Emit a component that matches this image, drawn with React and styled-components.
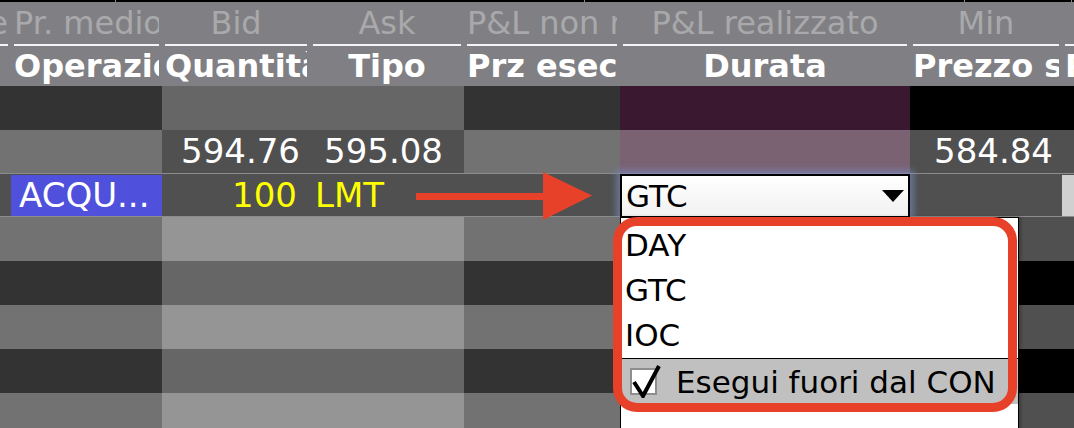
import React from 'react'
import styled, { createGlobalStyle, css } from 'styled-components'

// column widths shared by header and body rows (the last one runs off screen)
const COLS = '11px 151px 148px 154px 156px 290px 152px 160px'

const GlobalStyle = createGlobalStyle`
  html, body {
    margin: 0;
    padding: 0;
    background: #808084;
  }
  body {
    overflow: hidden;
  }
`

const Screen = styled.div`
  position: relative;
  width: 1074px;
  height: 428px;
  overflow: hidden;
  background: #808084;
  font-family: 'DejaVu Sans', Verdana, sans-serif;
`

// header

const TopStrip = styled.div`
  display: grid;
  grid-template-columns: 116px 469px 380px 107px 1fr;
  height: 2px;
  background: #000;
`

const Tick = styled.div`
  border-right: 1px solid #8a8a8a;
`

const HeaderRow = styled.div`
  display: grid;
  grid-template-columns: ${COLS};
  height: ${(p) => p.$h}px;
  background: #808084;
`

const HeadCell = styled.div`
  min-width: 0;
  padding: ${(p) => p.$pad || '0 3px'};
`

const HeadLabel = styled.div`
  height: 100%;
  box-sizing: border-box;
  overflow: hidden;
  white-space: nowrap;
  text-align: center;
  direction: ${(p) => (p.$rtl ? 'rtl' : 'ltr')};
  font-size: 32px;
  ${(p) =>
    p.$top
      ? css`
          color: #a9a9ab;
          line-height: 42px;
          border-bottom: 2px solid #f4f4f4;
        `
      : css`
          color: #fff;
          font-weight: bold;
          line-height: 40px;
        `}
`

// body

const Row = styled.div`
  display: grid;
  grid-template-columns: ${COLS};
  height: ${(p) => p.$h || 44}px;
  box-sizing: border-box;
  ${(p) =>
    p.$selected &&
    css`
      background: #505050;
      border-top: 1px solid #8c8c8c;
      border-bottom: 1px solid #8c8c8c;
    `}
`

const Cell = styled.div`
  min-width: 0;
  overflow: hidden;
  white-space: nowrap;
  background: ${(p) => p.$bg || 'transparent'};
  color: ${(p) => p.$color || '#fff'};
  font-size: 34px;
  line-height: ${(p) => p.$lh || 44}px;
  text-align: ${(p) => p.$align || 'left'};
  padding: 0 ${(p) => p.$pr || 0}px 0 ${(p) => p.$pl || 0}px;
`

const InsetCell = styled(Cell)`
  margin: 1px 0;
`

const ComboCell = styled.div`
  min-width: 0;
`

const Combo = styled.div`
  height: 43px;
  box-sizing: border-box;
  display: flex;
  align-items: center;
  justify-content: space-between;
  padding: 0 4px 0 4px;
  background: linear-gradient(#ffffff, #f1f1f1);
  border: 2px solid #000;
  border-bottom-width: 1px;
  box-shadow: 0 0 6px 4px rgba(120, 140, 195, 0.6);
  color: #000;
  font-size: 31px;
  line-height: 40px;
`

const Caret = styled.span`
  width: 0;
  height: 0;
  border-left: 11px solid transparent;
  border-right: 11px solid transparent;
  border-top: 12px solid #000;
`

// overlays

const Arrow = styled.svg`
  position: absolute;
  left: 416px;
  top: 172px;
`

const DropList = styled.div`
  position: absolute;
  left: 620px;
  top: 217px;
  width: 399px;
  height: 220px;
  box-sizing: border-box;
  border: 1px solid #000;
  background: #fff;
  padding-top: 5px;
  overflow: hidden;
  font-size: 31px;
  color: #000;
  box-shadow: 2px 0 3px rgba(0, 0, 0, 0.25);
`

const Option = styled.div`
  height: 45px;
  line-height: 45px;
  padding-left: 4px;
  white-space: nowrap;
`

const CheckRow = styled.div`
  display: flex;
  align-items: center;
  gap: 19px;
  height: 45px;
  padding-left: 9px;
  border-top: 1px solid #000;
  background: #c0c0c0;
  white-space: nowrap;
  overflow: hidden;
`

const CheckBox = styled.span`
  position: relative;
  flex: none;
  width: 27px;
  height: 27px;
  box-sizing: border-box;
  border: 2px solid #8e8e8e;
  background: #fff;
`

const CheckMark = styled.svg`
  position: absolute;
  left: -1px;
  top: -8px;
`

const Annotation = styled.div`
  position: absolute;
  left: 613px;
  top: 217px;
  width: 404px;
  height: 195px;
  box-sizing: border-box;
  border: 9px solid #e8412a;
  border-radius: 24px;
`

// data

const DARK = '#333333'
const LIGHT = '#727272'
const MID_DARK = '#666666'
const MID_LIGHT = '#959595'
const LIVE = '#505050'

const lowerRows = [1, 0, 1, 0, 1] // 1 = light row

function Header() {
  const top = ['Pr. medio', 'Bid', 'Ask', 'P&L non realizzato', 'P&L realizzato', 'Min', 'Max']
  const bottom = ['Operazione', 'Quantità', 'Tipo', 'Prz esecuzione', 'Durata', 'Prezzo stop', 'Prezzo limite']
  return (
    <>
      <TopStrip>
        <Tick />
        <Tick />
        <Tick />
        <Tick />
        <div />
      </TopStrip>
      <HeaderRow $h={44}>
        <HeadCell $pad="0 3px 0 0">
          <HeadLabel $top $rtl>
            Posizione
          </HeadLabel>
        </HeadCell>
        {top.map((t) => (
          <HeadCell key={t}>
            <HeadLabel $top>{t}</HeadLabel>
          </HeadCell>
        ))}
      </HeaderRow>
      <HeaderRow $h={40}>
        <HeadCell $pad="0 3px 0 0" />
        {bottom.map((t) => (
          <HeadCell key={t}>
            <HeadLabel>{t}</HeadLabel>
          </HeadCell>
        ))}
      </HeaderRow>
    </>
  )
}

function StripeRow({ light }) {
  const side = light ? LIVE : '#000'
  return (
    <Row>
      <Cell $bg={light ? LIGHT : DARK} />
      <Cell $bg={light ? LIGHT : DARK} />
      <Cell $bg={light ? MID_LIGHT : MID_DARK} />
      <Cell $bg={light ? MID_LIGHT : MID_DARK} />
      <Cell $bg={light ? LIGHT : DARK} />
      <Cell $bg={light ? '#7a6273' : '#3a1830'} />
      <Cell $bg={side} />
      <Cell $bg={side} />
    </Row>
  )
}

export default function App() {
  return (
    <Screen>
      <GlobalStyle />
      <Header />

      <StripeRow light={false} />

      <Row $h={43}>
        <Cell $bg={LIGHT} />
        <Cell $bg={LIGHT} />
        <Cell $bg={LIVE} $align="right" $pr={10} $lh={43}>
          594.76
        </Cell>
        <Cell $bg={LIVE} $align="right" $pr={21} $lh={43}>
          595.08
        </Cell>
        <Cell $bg={LIGHT} />
        <Cell $bg="#7a6273" />
        <Cell $bg={LIVE} $align="right" $pr={9} $lh={43}>
          584.84
        </Cell>
        <Cell $bg={LIVE} />
      </Row>

      <Row $selected>
        <Cell />
        <InsetCell $bg="#4f50dc" $pl={8} $lh={40}>
          ACQU...
        </InsetCell>
        <Cell $color="#ffff00" $align="right" $pr={13} $lh={42}>
          100
        </Cell>
        <Cell $color="#ffff00" $pl={5} $lh={42}>
          LMT
        </Cell>
        <Cell />
        <ComboCell>
          <Combo>
            <span>GTC</span>
            <Caret />
          </Combo>
        </ComboCell>
        <Cell />
        <InsetCell $bg="#d0d0d0" />
      </Row>

      {lowerRows.map((l, i) => (
        <StripeRow key={i} light={l === 1} />
      ))}

      <Arrow width="176" height="48" viewBox="0 0 176 48">
        <rect x="0" y="21" width="132" height="7" fill="#e8412a" />
        <polygon points="127,0 176,23.5 127,48" fill="#e8412a" />
      </Arrow>

      <DropList>
        <Option>DAY</Option>
        <Option>GTC</Option>
        <Option>IOC</Option>
        <CheckRow>
          <CheckBox>
            <CheckMark width="32" height="36" viewBox="0 0 32 36">
              <path d="M3 20 L12 34 L28 4" fill="none" stroke="#000" strokeWidth="4" strokeLinejoin="miter" />
            </CheckMark>
          </CheckBox>
          <span>Esegui fuori dal CON</span>
        </CheckRow>
      </DropList>

      <Annotation />
    </Screen>
  )
}
